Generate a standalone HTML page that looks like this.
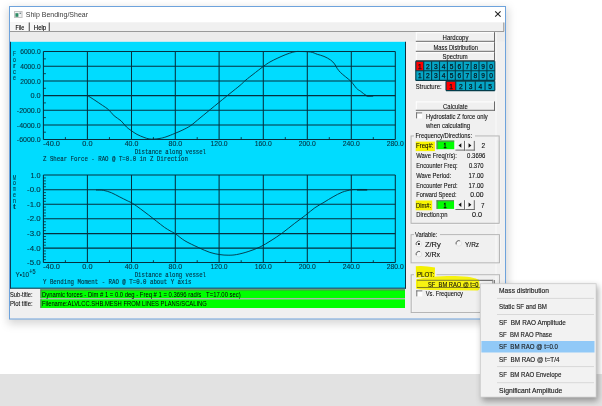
<!DOCTYPE html>
<html><head><meta charset="utf-8"><title>Ship Bending/Shear</title>
<style>html,body{margin:0;padding:0;background:#fff;overflow:hidden;width:602px;height:406px}
svg{display:block;will-change:transform}</style></head>
<body><svg width="602" height="406" viewBox="0 0 602 406">
<rect x="0" y="0" width="602" height="406" fill="#ffffff" />
<rect x="0" y="374" width="602" height="32" fill="#e2e2e2" />
<defs><filter id="sh" x="-20%" y="-20%" width="140%" height="140%"><feGaussianBlur stdDeviation="4"/></filter><filter id="sh2" x="-20%" y="-20%" width="140%" height="140%"><feGaussianBlur stdDeviation="3"/></filter><filter id="hl" x="-10%" y="-50%" width="120%" height="200%"><feGaussianBlur stdDeviation="0.8"/></filter></defs>
<rect x="8" y="8" width="500" height="316" fill="rgba(0,0,0,0.16)" filter="url(#sh)"/>
<rect x="9" y="6" width="497" height="313.5" fill="#6ea3dc" />
<rect x="10" y="7" width="495" height="311.5" fill="#f0f0f0" />
<rect x="10" y="7" width="495" height="15.5" fill="#ffffff" />
<rect x="14" y="11" width="8.5" height="7" fill="#f2f2f2" />
<rect x="14.5" y="11.5" width="7.5" height="6" fill="none" stroke="#c4c4c4" stroke-width="1"/>
<rect x="15.4" y="13.2" width="3" height="3.6" fill="#2f8a64" />
<rect x="19.5" y="12.6" width="1.6" height="1.4" fill="#7a8a90" />
<text x="25.80" y="17.20" font-size="7.9" fill="#3a3a3a" font-family="'Liberation Sans', sans-serif" textLength="62.20" lengthAdjust="spacingAndGlyphs" >Ship Bending/Shear</text>
<line x1="495.2" y1="11.3" x2="500.6" y2="16.7" stroke="#222" stroke-width="1.05" />
<line x1="500.6" y1="11.3" x2="495.2" y2="16.7" stroke="#222" stroke-width="1.05" />
<rect x="10" y="22.5" width="494" height="9" fill="#f0f0f0" />
<rect x="10" y="22.5" width="19" height="8.5" fill="#f7f7f7" />
<rect x="30" y="22.5" width="19" height="8.5" fill="#f7f7f7" />
<line x1="29.3" y1="22.5" x2="29.3" y2="31.5" stroke="#606060" stroke-width="1.2" />
<line x1="49.3" y1="22.5" x2="49.3" y2="31.5" stroke="#606060" stroke-width="1.2" />
<line x1="503.8" y1="22.5" x2="503.8" y2="31.5" stroke="#909090" stroke-width="1" />
<text x="15.60" y="29.80" font-size="7.2" fill="#0a0a0a" font-family="'Liberation Sans', sans-serif" textLength="8.60" lengthAdjust="spacingAndGlyphs" stroke="#0a0a0a" stroke-width="0.15">File</text>
<text x="33.80" y="29.80" font-size="7.2" fill="#0a0a0a" font-family="'Liberation Sans', sans-serif" textLength="12.40" lengthAdjust="spacingAndGlyphs" stroke="#0a0a0a" stroke-width="0.15">Help</text>
<line x1="10" y1="31.5" x2="504" y2="31.5" stroke="#9a9a9a" stroke-width="1" />
<rect x="10" y="32" width="495" height="9.5" fill="#ececec" />
<rect x="10" y="41.8" width="396" height="246.7" fill="#00dcff" />
<line x1="10.5" y1="41.8" x2="10.5" y2="288.5" stroke="#0a3b55" stroke-width="1" />
<line x1="405.5" y1="41.8" x2="405.5" y2="288.5" stroke="#103040" stroke-width="1" />
<line x1="10" y1="288.2" x2="406" y2="288.2" stroke="#183040" stroke-width="1" />
<line x1="43.4" y1="51.4" x2="43.4" y2="139.4" stroke="#05303f" stroke-width="1.05" />
<line x1="87.4" y1="51.4" x2="87.4" y2="139.4" stroke="#05303f" stroke-width="1.05" />
<line x1="131.5" y1="51.4" x2="131.5" y2="139.4" stroke="#05303f" stroke-width="1.05" />
<line x1="175.3" y1="51.4" x2="175.3" y2="139.4" stroke="#05303f" stroke-width="1.05" />
<line x1="219.1" y1="51.4" x2="219.1" y2="139.4" stroke="#05303f" stroke-width="1.05" />
<line x1="263.3" y1="51.4" x2="263.3" y2="139.4" stroke="#05303f" stroke-width="1.05" />
<line x1="307.3" y1="51.4" x2="307.3" y2="139.4" stroke="#05303f" stroke-width="1.05" />
<line x1="351.3" y1="51.4" x2="351.3" y2="139.4" stroke="#05303f" stroke-width="1.05" />
<line x1="395.3" y1="51.4" x2="395.3" y2="139.4" stroke="#05303f" stroke-width="1.05" />
<line x1="43.4" y1="51.4" x2="395.3" y2="51.4" stroke="#05303f" stroke-width="1.05" />
<line x1="43.4" y1="66.3" x2="395.3" y2="66.3" stroke="#05303f" stroke-width="1.05" />
<line x1="43.4" y1="81.0" x2="395.3" y2="81.0" stroke="#05303f" stroke-width="1.05" />
<line x1="43.4" y1="95.6" x2="395.3" y2="95.6" stroke="#05303f" stroke-width="1.05" />
<line x1="43.4" y1="110.2" x2="395.3" y2="110.2" stroke="#05303f" stroke-width="1.05" />
<line x1="43.4" y1="125.0" x2="395.3" y2="125.0" stroke="#05303f" stroke-width="1.05" />
<line x1="43.4" y1="139.4" x2="395.3" y2="139.4" stroke="#05303f" stroke-width="1.05" />
<line x1="43.4" y1="58.849999999999994" x2="45.9" y2="58.849999999999994" stroke="#05303f" stroke-width="0.85" />
<line x1="43.4" y1="73.65" x2="45.9" y2="73.65" stroke="#05303f" stroke-width="0.85" />
<line x1="43.4" y1="88.3" x2="45.9" y2="88.3" stroke="#05303f" stroke-width="0.85" />
<line x1="43.4" y1="102.9" x2="45.9" y2="102.9" stroke="#05303f" stroke-width="0.85" />
<line x1="43.4" y1="117.6" x2="45.9" y2="117.6" stroke="#05303f" stroke-width="0.85" />
<line x1="43.4" y1="132.2" x2="45.9" y2="132.2" stroke="#05303f" stroke-width="0.85" />
<line x1="65.4" y1="139.4" x2="65.4" y2="137.1" stroke="#05303f" stroke-width="0.9" />
<line x1="109.45" y1="139.4" x2="109.45" y2="137.1" stroke="#05303f" stroke-width="0.9" />
<line x1="153.4" y1="139.4" x2="153.4" y2="137.1" stroke="#05303f" stroke-width="0.9" />
<line x1="197.2" y1="139.4" x2="197.2" y2="137.1" stroke="#05303f" stroke-width="0.9" />
<line x1="241.2" y1="139.4" x2="241.2" y2="137.1" stroke="#05303f" stroke-width="0.9" />
<line x1="285.3" y1="139.4" x2="285.3" y2="137.1" stroke="#05303f" stroke-width="0.9" />
<line x1="329.3" y1="139.4" x2="329.3" y2="137.1" stroke="#05303f" stroke-width="0.9" />
<line x1="373.3" y1="139.4" x2="373.3" y2="137.1" stroke="#05303f" stroke-width="0.9" />
<path d="M 87.40 95.50 C 88.48 96.18 91.38 97.95 93.90 99.60 C 96.42 101.25 100.05 103.72 102.50 105.40 C 104.95 107.08 106.65 107.95 108.60 109.70 C 110.55 111.45 112.13 114.05 114.20 115.90 C 116.27 117.75 118.95 118.95 121.00 120.80 C 123.05 122.65 124.77 125.35 126.50 127.00 C 128.23 128.65 129.65 129.47 131.40 130.70 C 133.15 131.93 134.90 133.28 137.00 134.40 C 139.10 135.52 142.00 136.65 144.00 137.40 C 146.00 138.15 147.33 138.62 149.00 138.90 C 150.67 139.18 152.17 139.18 154.00 139.10 C 155.83 139.02 158.02 138.77 160.00 138.40 C 161.98 138.03 163.42 137.73 165.90 136.90 C 168.38 136.07 172.07 134.57 174.90 133.40 C 177.73 132.23 180.25 131.22 182.90 129.90 C 185.55 128.58 187.95 127.48 190.80 125.50 C 193.65 123.52 196.03 121.25 200.00 118.00 C 203.97 114.75 209.60 110.09 214.60 106.00 C 219.60 101.91 225.77 96.88 230.00 93.45 C 234.23 90.02 237.33 87.66 240.00 85.40 C 242.67 83.14 243.83 81.73 246.00 79.90 C 248.17 78.07 250.10 76.65 253.00 74.40 C 255.90 72.15 260.58 68.47 263.40 66.40 C 266.22 64.33 267.48 63.40 269.90 62.00 C 272.32 60.60 275.23 59.25 277.90 58.00 C 280.57 56.75 283.42 55.47 285.90 54.50 C 288.38 53.53 290.98 52.70 292.80 52.20 C 294.62 51.70 295.60 51.62 296.80 51.50 C 298.00 51.38 297.68 51.42 300.00 51.50 C 302.32 51.58 307.82 51.53 310.70 52.00 C 313.58 52.47 315.08 53.57 317.30 54.30 C 319.52 55.03 321.78 55.45 324.00 56.40 C 326.22 57.35 328.83 58.73 330.60 60.00 C 332.37 61.27 333.48 62.57 334.60 64.00 C 335.72 65.43 336.30 67.17 337.30 68.60 C 338.30 70.03 339.27 71.27 340.60 72.60 C 341.93 73.93 343.52 75.08 345.30 76.60 C 347.08 78.12 349.43 79.75 351.30 81.70 C 353.17 83.65 354.97 86.72 356.50 88.30 C 358.03 89.88 358.82 90.00 360.50 91.20 C 362.18 92.40 364.52 94.77 366.60 95.50 C 368.68 96.23 371.93 95.58 373.00 95.60 " fill="none" stroke="#05303f" stroke-width="0.9" stroke-linejoin="round"/>
<text x="40.60" y="53.95" font-size="7.2" fill="#05303f" font-family="'Liberation Sans', sans-serif" textLength="20.40" lengthAdjust="spacingAndGlyphs" text-anchor="end" stroke="#05303f" stroke-width="0.1">6000.0</text>
<text x="40.60" y="68.85" font-size="7.2" fill="#05303f" font-family="'Liberation Sans', sans-serif" textLength="20.40" lengthAdjust="spacingAndGlyphs" text-anchor="end" stroke="#05303f" stroke-width="0.1">4000.0</text>
<text x="40.60" y="83.55" font-size="7.2" fill="#05303f" font-family="'Liberation Sans', sans-serif" textLength="20.40" lengthAdjust="spacingAndGlyphs" text-anchor="end" stroke="#05303f" stroke-width="0.1">2000.0</text>
<text x="40.60" y="98.15" font-size="7.2" fill="#05303f" font-family="'Liberation Sans', sans-serif" textLength="10.20" lengthAdjust="spacingAndGlyphs" text-anchor="end" stroke="#05303f" stroke-width="0.1">0.0</text>
<text x="40.60" y="112.75" font-size="7.2" fill="#05303f" font-family="'Liberation Sans', sans-serif" textLength="23.80" lengthAdjust="spacingAndGlyphs" text-anchor="end" stroke="#05303f" stroke-width="0.1">-2000.0</text>
<text x="40.60" y="127.55" font-size="7.2" fill="#05303f" font-family="'Liberation Sans', sans-serif" textLength="23.80" lengthAdjust="spacingAndGlyphs" text-anchor="end" stroke="#05303f" stroke-width="0.1">-4000.0</text>
<text x="40.60" y="141.95" font-size="7.2" fill="#05303f" font-family="'Liberation Sans', sans-serif" textLength="23.80" lengthAdjust="spacingAndGlyphs" text-anchor="end" stroke="#05303f" stroke-width="0.1">-6000.0</text>
<text x="43.00" y="146.00" font-size="7.2" fill="#05303f" font-family="'Liberation Sans', sans-serif" textLength="17.00" lengthAdjust="spacingAndGlyphs" stroke="#05303f" stroke-width="0.1">-40.0</text>
<text x="87.40" y="146.00" font-size="7.2" fill="#05303f" font-family="'Liberation Sans', sans-serif" textLength="10.20" lengthAdjust="spacingAndGlyphs" text-anchor="middle" stroke="#05303f" stroke-width="0.1">0.0</text>
<text x="131.50" y="146.00" font-size="7.2" fill="#05303f" font-family="'Liberation Sans', sans-serif" textLength="13.60" lengthAdjust="spacingAndGlyphs" text-anchor="middle" stroke="#05303f" stroke-width="0.1">40.0</text>
<text x="175.30" y="146.00" font-size="7.2" fill="#05303f" font-family="'Liberation Sans', sans-serif" textLength="13.60" lengthAdjust="spacingAndGlyphs" text-anchor="middle" stroke="#05303f" stroke-width="0.1">80.0</text>
<text x="219.10" y="146.00" font-size="7.2" fill="#05303f" font-family="'Liberation Sans', sans-serif" textLength="17.00" lengthAdjust="spacingAndGlyphs" text-anchor="middle" stroke="#05303f" stroke-width="0.1">120.0</text>
<text x="263.30" y="146.00" font-size="7.2" fill="#05303f" font-family="'Liberation Sans', sans-serif" textLength="17.00" lengthAdjust="spacingAndGlyphs" text-anchor="middle" stroke="#05303f" stroke-width="0.1">160.0</text>
<text x="307.30" y="146.00" font-size="7.2" fill="#05303f" font-family="'Liberation Sans', sans-serif" textLength="17.00" lengthAdjust="spacingAndGlyphs" text-anchor="middle" stroke="#05303f" stroke-width="0.1">200.0</text>
<text x="351.30" y="146.00" font-size="7.2" fill="#05303f" font-family="'Liberation Sans', sans-serif" textLength="17.00" lengthAdjust="spacingAndGlyphs" text-anchor="middle" stroke="#05303f" stroke-width="0.1">240.0</text>
<text x="395.30" y="146.00" font-size="7.2" fill="#05303f" font-family="'Liberation Sans', sans-serif" textLength="17.00" lengthAdjust="spacingAndGlyphs" text-anchor="middle" stroke="#05303f" stroke-width="0.1">280.0</text>
<text x="134.70" y="154.00" font-size="8.0" fill="#05303f" font-family="'Liberation Mono', monospace" textLength="71.30" lengthAdjust="spacingAndGlyphs" stroke="#05303f" stroke-width="0.15">Distance along vessel</text>
<text x="43.00" y="161.30" font-size="8.0" fill="#05303f" font-family="'Liberation Mono', monospace" textLength="144.90" lengthAdjust="spacingAndGlyphs" stroke="#05303f" stroke-width="0.15">Z Shear Force - RAO @ T=0.0 in Z Direction</text>
<text x="14.50" y="55.90" font-size="7.6" fill="#05303f" font-family="'Liberation Sans', sans-serif" textLength="2.90" lengthAdjust="spacingAndGlyphs" text-anchor="middle" stroke="#05303f" stroke-width="0.12">F</text>
<text x="14.50" y="61.85" font-size="7.6" fill="#05303f" font-family="'Liberation Sans', sans-serif" textLength="2.90" lengthAdjust="spacingAndGlyphs" text-anchor="middle" stroke="#05303f" stroke-width="0.12">o</text>
<text x="14.50" y="67.80" font-size="7.6" fill="#05303f" font-family="'Liberation Sans', sans-serif" textLength="2.90" lengthAdjust="spacingAndGlyphs" text-anchor="middle" stroke="#05303f" stroke-width="0.12">r</text>
<text x="14.50" y="73.75" font-size="7.6" fill="#05303f" font-family="'Liberation Sans', sans-serif" textLength="2.90" lengthAdjust="spacingAndGlyphs" text-anchor="middle" stroke="#05303f" stroke-width="0.12">c</text>
<text x="14.50" y="79.70" font-size="7.6" fill="#05303f" font-family="'Liberation Sans', sans-serif" textLength="2.90" lengthAdjust="spacingAndGlyphs" text-anchor="middle" stroke="#05303f" stroke-width="0.12">e</text>
<line x1="43.4" y1="175.0" x2="43.4" y2="262.5" stroke="#05303f" stroke-width="1.05" />
<line x1="87.4" y1="175.0" x2="87.4" y2="262.5" stroke="#05303f" stroke-width="1.05" />
<line x1="131.5" y1="175.0" x2="131.5" y2="262.5" stroke="#05303f" stroke-width="1.05" />
<line x1="175.3" y1="175.0" x2="175.3" y2="262.5" stroke="#05303f" stroke-width="1.05" />
<line x1="219.1" y1="175.0" x2="219.1" y2="262.5" stroke="#05303f" stroke-width="1.05" />
<line x1="263.3" y1="175.0" x2="263.3" y2="262.5" stroke="#05303f" stroke-width="1.05" />
<line x1="307.3" y1="175.0" x2="307.3" y2="262.5" stroke="#05303f" stroke-width="1.05" />
<line x1="351.3" y1="175.0" x2="351.3" y2="262.5" stroke="#05303f" stroke-width="1.05" />
<line x1="395.3" y1="175.0" x2="395.3" y2="262.5" stroke="#05303f" stroke-width="1.05" />
<line x1="43.4" y1="175.0" x2="395.3" y2="175.0" stroke="#05303f" stroke-width="1.05" />
<line x1="43.4" y1="189.7" x2="395.3" y2="189.7" stroke="#05303f" stroke-width="1.05" />
<line x1="43.4" y1="204.2" x2="395.3" y2="204.2" stroke="#05303f" stroke-width="1.05" />
<line x1="43.4" y1="218.8" x2="395.3" y2="218.8" stroke="#05303f" stroke-width="1.05" />
<line x1="43.4" y1="233.6" x2="395.3" y2="233.6" stroke="#05303f" stroke-width="1.05" />
<line x1="43.4" y1="248.1" x2="395.3" y2="248.1" stroke="#05303f" stroke-width="1.05" />
<line x1="43.4" y1="262.5" x2="395.3" y2="262.5" stroke="#05303f" stroke-width="1.05" />
<line x1="43.4" y1="177.94" x2="45.9" y2="177.94" stroke="#05303f" stroke-width="0.85" />
<line x1="43.4" y1="180.88" x2="45.9" y2="180.88" stroke="#05303f" stroke-width="0.85" />
<line x1="43.4" y1="183.82" x2="45.9" y2="183.82" stroke="#05303f" stroke-width="0.85" />
<line x1="43.4" y1="186.76" x2="45.9" y2="186.76" stroke="#05303f" stroke-width="0.85" />
<line x1="43.4" y1="192.6" x2="45.9" y2="192.6" stroke="#05303f" stroke-width="0.85" />
<line x1="43.4" y1="195.5" x2="45.9" y2="195.5" stroke="#05303f" stroke-width="0.85" />
<line x1="43.4" y1="198.39999999999998" x2="45.9" y2="198.39999999999998" stroke="#05303f" stroke-width="0.85" />
<line x1="43.4" y1="201.29999999999998" x2="45.9" y2="201.29999999999998" stroke="#05303f" stroke-width="0.85" />
<line x1="43.4" y1="207.12" x2="45.9" y2="207.12" stroke="#05303f" stroke-width="0.85" />
<line x1="43.4" y1="210.04" x2="45.9" y2="210.04" stroke="#05303f" stroke-width="0.85" />
<line x1="43.4" y1="212.96" x2="45.9" y2="212.96" stroke="#05303f" stroke-width="0.85" />
<line x1="43.4" y1="215.88" x2="45.9" y2="215.88" stroke="#05303f" stroke-width="0.85" />
<line x1="43.4" y1="221.76000000000002" x2="45.9" y2="221.76000000000002" stroke="#05303f" stroke-width="0.85" />
<line x1="43.4" y1="224.72" x2="45.9" y2="224.72" stroke="#05303f" stroke-width="0.85" />
<line x1="43.4" y1="227.68" x2="45.9" y2="227.68" stroke="#05303f" stroke-width="0.85" />
<line x1="43.4" y1="230.64" x2="45.9" y2="230.64" stroke="#05303f" stroke-width="0.85" />
<line x1="43.4" y1="236.5" x2="45.9" y2="236.5" stroke="#05303f" stroke-width="0.85" />
<line x1="43.4" y1="239.4" x2="45.9" y2="239.4" stroke="#05303f" stroke-width="0.85" />
<line x1="43.4" y1="242.29999999999998" x2="45.9" y2="242.29999999999998" stroke="#05303f" stroke-width="0.85" />
<line x1="43.4" y1="245.2" x2="45.9" y2="245.2" stroke="#05303f" stroke-width="0.85" />
<line x1="43.4" y1="250.98" x2="45.9" y2="250.98" stroke="#05303f" stroke-width="0.85" />
<line x1="43.4" y1="253.85999999999999" x2="45.9" y2="253.85999999999999" stroke="#05303f" stroke-width="0.85" />
<line x1="43.4" y1="256.74" x2="45.9" y2="256.74" stroke="#05303f" stroke-width="0.85" />
<line x1="43.4" y1="259.62" x2="45.9" y2="259.62" stroke="#05303f" stroke-width="0.85" />
<line x1="65.4" y1="262.5" x2="65.4" y2="260.2" stroke="#05303f" stroke-width="0.9" />
<line x1="109.45" y1="262.5" x2="109.45" y2="260.2" stroke="#05303f" stroke-width="0.9" />
<line x1="153.4" y1="262.5" x2="153.4" y2="260.2" stroke="#05303f" stroke-width="0.9" />
<line x1="197.2" y1="262.5" x2="197.2" y2="260.2" stroke="#05303f" stroke-width="0.9" />
<line x1="241.2" y1="262.5" x2="241.2" y2="260.2" stroke="#05303f" stroke-width="0.9" />
<line x1="285.3" y1="262.5" x2="285.3" y2="260.2" stroke="#05303f" stroke-width="0.9" />
<line x1="329.3" y1="262.5" x2="329.3" y2="260.2" stroke="#05303f" stroke-width="0.9" />
<line x1="373.3" y1="262.5" x2="373.3" y2="260.2" stroke="#05303f" stroke-width="0.9" />
<path d="M 96.00 190.00 C 97.22 190.05 100.75 189.85 103.30 190.30 C 105.85 190.75 108.65 191.63 111.30 192.70 C 113.95 193.77 116.55 195.37 119.20 196.70 C 121.85 198.03 124.98 199.60 127.20 200.70 C 129.42 201.80 130.28 201.93 132.50 203.30 C 134.72 204.67 137.83 206.97 140.50 208.90 C 143.17 210.83 145.85 212.87 148.50 214.90 C 151.15 216.93 153.75 219.03 156.40 221.10 C 159.05 223.17 162.13 225.68 164.40 227.30 C 166.67 228.92 168.10 229.67 170.00 230.80 C 171.90 231.93 173.32 232.43 175.80 234.10 C 178.28 235.77 181.17 238.58 184.90 240.80 C 188.63 243.02 194.03 245.47 198.20 247.40 C 202.37 249.33 206.30 251.20 209.90 252.40 C 213.50 253.60 216.77 254.13 219.80 254.60 C 222.83 255.07 225.33 255.20 228.10 255.20 C 230.87 255.20 233.07 255.20 236.40 254.60 C 239.73 254.00 244.17 252.87 248.10 251.60 C 252.03 250.33 256.18 248.83 260.00 247.00 C 263.82 245.17 267.35 242.88 271.00 240.60 C 274.65 238.32 277.95 236.18 281.90 233.30 C 285.85 230.42 290.73 226.33 294.70 223.30 C 298.67 220.27 302.35 217.68 305.70 215.10 C 309.05 212.52 311.75 209.93 314.80 207.80 C 317.85 205.67 320.95 204.13 324.00 202.30 C 327.05 200.47 330.07 198.48 333.10 196.80 C 336.13 195.12 339.15 193.37 342.20 192.20 C 345.25 191.03 348.97 190.25 351.40 189.80 C 353.83 189.35 354.22 189.55 356.80 189.50 C 359.38 189.45 365.22 189.50 366.90 189.50 " fill="none" stroke="#05303f" stroke-width="0.9" stroke-linejoin="round"/>
<text x="40.60" y="177.55" font-size="7.2" fill="#05303f" font-family="'Liberation Sans', sans-serif" textLength="10.20" lengthAdjust="spacingAndGlyphs" text-anchor="end" stroke="#05303f" stroke-width="0.1">1.0</text>
<text x="40.60" y="192.25" font-size="7.2" fill="#05303f" font-family="'Liberation Sans', sans-serif" textLength="13.60" lengthAdjust="spacingAndGlyphs" text-anchor="end" stroke="#05303f" stroke-width="0.1">-0.0</text>
<text x="40.60" y="206.75" font-size="7.2" fill="#05303f" font-family="'Liberation Sans', sans-serif" textLength="13.60" lengthAdjust="spacingAndGlyphs" text-anchor="end" stroke="#05303f" stroke-width="0.1">-1.0</text>
<text x="40.60" y="221.35" font-size="7.2" fill="#05303f" font-family="'Liberation Sans', sans-serif" textLength="13.60" lengthAdjust="spacingAndGlyphs" text-anchor="end" stroke="#05303f" stroke-width="0.1">-2.0</text>
<text x="40.60" y="236.15" font-size="7.2" fill="#05303f" font-family="'Liberation Sans', sans-serif" textLength="13.60" lengthAdjust="spacingAndGlyphs" text-anchor="end" stroke="#05303f" stroke-width="0.1">-3.0</text>
<text x="40.60" y="250.65" font-size="7.2" fill="#05303f" font-family="'Liberation Sans', sans-serif" textLength="13.60" lengthAdjust="spacingAndGlyphs" text-anchor="end" stroke="#05303f" stroke-width="0.1">-4.0</text>
<text x="40.60" y="265.05" font-size="7.2" fill="#05303f" font-family="'Liberation Sans', sans-serif" textLength="13.60" lengthAdjust="spacingAndGlyphs" text-anchor="end" stroke="#05303f" stroke-width="0.1">-5.0</text>
<text x="43.00" y="269.10" font-size="7.2" fill="#05303f" font-family="'Liberation Sans', sans-serif" textLength="17.00" lengthAdjust="spacingAndGlyphs" stroke="#05303f" stroke-width="0.1">-40.0</text>
<text x="87.40" y="269.10" font-size="7.2" fill="#05303f" font-family="'Liberation Sans', sans-serif" textLength="10.20" lengthAdjust="spacingAndGlyphs" text-anchor="middle" stroke="#05303f" stroke-width="0.1">0.0</text>
<text x="131.50" y="269.10" font-size="7.2" fill="#05303f" font-family="'Liberation Sans', sans-serif" textLength="13.60" lengthAdjust="spacingAndGlyphs" text-anchor="middle" stroke="#05303f" stroke-width="0.1">40.0</text>
<text x="175.30" y="269.10" font-size="7.2" fill="#05303f" font-family="'Liberation Sans', sans-serif" textLength="13.60" lengthAdjust="spacingAndGlyphs" text-anchor="middle" stroke="#05303f" stroke-width="0.1">80.0</text>
<text x="219.10" y="269.10" font-size="7.2" fill="#05303f" font-family="'Liberation Sans', sans-serif" textLength="17.00" lengthAdjust="spacingAndGlyphs" text-anchor="middle" stroke="#05303f" stroke-width="0.1">120.0</text>
<text x="263.30" y="269.10" font-size="7.2" fill="#05303f" font-family="'Liberation Sans', sans-serif" textLength="17.00" lengthAdjust="spacingAndGlyphs" text-anchor="middle" stroke="#05303f" stroke-width="0.1">160.0</text>
<text x="307.30" y="269.10" font-size="7.2" fill="#05303f" font-family="'Liberation Sans', sans-serif" textLength="17.00" lengthAdjust="spacingAndGlyphs" text-anchor="middle" stroke="#05303f" stroke-width="0.1">200.0</text>
<text x="351.30" y="269.10" font-size="7.2" fill="#05303f" font-family="'Liberation Sans', sans-serif" textLength="17.00" lengthAdjust="spacingAndGlyphs" text-anchor="middle" stroke="#05303f" stroke-width="0.1">240.0</text>
<text x="395.30" y="269.10" font-size="7.2" fill="#05303f" font-family="'Liberation Sans', sans-serif" textLength="17.00" lengthAdjust="spacingAndGlyphs" text-anchor="middle" stroke="#05303f" stroke-width="0.1">280.0</text>
<text x="134.70" y="277.10" font-size="8.0" fill="#05303f" font-family="'Liberation Mono', monospace" textLength="71.30" lengthAdjust="spacingAndGlyphs" stroke="#05303f" stroke-width="0.15">Distance along vessel</text>
<text x="43.00" y="284.40" font-size="8.0" fill="#05303f" font-family="'Liberation Mono', monospace" textLength="148.35" lengthAdjust="spacingAndGlyphs" stroke="#05303f" stroke-width="0.15">Y Bending Moment - RAO @ T=0.0 about Y axis</text>
<text x="14.50" y="179.50" font-size="7.6" fill="#05303f" font-family="'Liberation Sans', sans-serif" textLength="3.40" lengthAdjust="spacingAndGlyphs" text-anchor="middle" stroke="#05303f" stroke-width="0.12">M</text>
<text x="14.50" y="185.45" font-size="7.6" fill="#05303f" font-family="'Liberation Sans', sans-serif" textLength="2.90" lengthAdjust="spacingAndGlyphs" text-anchor="middle" stroke="#05303f" stroke-width="0.12">o</text>
<text x="14.50" y="191.40" font-size="7.6" fill="#05303f" font-family="'Liberation Sans', sans-serif" textLength="2.90" lengthAdjust="spacingAndGlyphs" text-anchor="middle" stroke="#05303f" stroke-width="0.12">m</text>
<text x="14.50" y="197.35" font-size="7.6" fill="#05303f" font-family="'Liberation Sans', sans-serif" textLength="2.90" lengthAdjust="spacingAndGlyphs" text-anchor="middle" stroke="#05303f" stroke-width="0.12">e</text>
<text x="14.50" y="203.30" font-size="7.6" fill="#05303f" font-family="'Liberation Sans', sans-serif" textLength="2.90" lengthAdjust="spacingAndGlyphs" text-anchor="middle" stroke="#05303f" stroke-width="0.12">n</text>
<text x="14.50" y="209.25" font-size="7.6" fill="#05303f" font-family="'Liberation Sans', sans-serif" textLength="2.90" lengthAdjust="spacingAndGlyphs" text-anchor="middle" stroke="#05303f" stroke-width="0.12">t</text>
<line x1="366.5" y1="95.8" x2="373.2" y2="95.8" stroke="#05303f" stroke-width="1.5" />
<line x1="357" y1="189.8" x2="367.2" y2="189.8" stroke="#05303f" stroke-width="1.5" />
<text x="15.50" y="276.60" font-size="7.2" fill="#05303f" font-family="'Liberation Sans', sans-serif" textLength="13.50" lengthAdjust="spacingAndGlyphs" stroke="#05303f" stroke-width="0.1">Y•10</text>
<text x="29.20" y="274.00" font-size="6.4" fill="#05303f" font-family="'Liberation Sans', sans-serif" textLength="6.30" lengthAdjust="spacingAndGlyphs" stroke="#05303f" stroke-width="0.1">+5</text>
<text x="10.00" y="296.80" font-size="6.7" fill="#0a0a0a" font-family="'Liberation Sans', sans-serif" textLength="22.60" lengthAdjust="spacingAndGlyphs" stroke="#0a0a0a" stroke-width="0.08">Sub-title:</text>
<text x="10.00" y="306.40" font-size="6.7" fill="#0a0a0a" font-family="'Liberation Sans', sans-serif" textLength="22.60" lengthAdjust="spacingAndGlyphs" stroke="#0a0a0a" stroke-width="0.08">Plot title:</text>
<rect x="40.4" y="289.4" width="364.6" height="8.8" fill="#00ff00" />
<rect x="40.4" y="299.2" width="364.6" height="8.8" fill="#00ff00" />
<line x1="40.4" y1="289.9" x2="405" y2="289.9" stroke="#6a6a6a" stroke-width="1" />
<line x1="40.9" y1="289.4" x2="40.9" y2="298.2" stroke="#6a6a6a" stroke-width="1" />
<line x1="40.4" y1="298.7" x2="405" y2="298.7" stroke="#a8a8a8" stroke-width="1" />
<line x1="40.9" y1="299.2" x2="40.9" y2="308" stroke="#6a6a6a" stroke-width="1" />
<text x="42.00" y="296.60" font-size="7.0" fill="#000" font-family="'Liberation Sans', sans-serif" textLength="198.70" lengthAdjust="spacingAndGlyphs"  xml:space="preserve" style="white-space:pre">Dynamic forces - Dim # 1 = 0.0 deg - Freq # 1 = 0.3696 rad/s   T=17.00 sec)</text>
<text x="42.00" y="306.30" font-size="7.0" fill="#000" font-family="'Liberation Sans', sans-serif" textLength="164.80" lengthAdjust="spacingAndGlyphs" >Filename:ALVLCC.SHB.MESH FROM LINES PLANS/SCALING</text>
<rect x="415.8" y="32.2" width="79.19999999999999" height="9.599999999999994" fill="#f0f0f0" />
<line x1="416.3" y1="32.2" x2="416.3" y2="41.8" stroke="#ffffff" stroke-width="1" />
<line x1="415.8" y1="32.7" x2="495.0" y2="32.7" stroke="#ffffff" stroke-width="1" />
<line x1="494.5" y1="32.2" x2="494.5" y2="41.8" stroke="#6a6a6a" stroke-width="1" />
<line x1="415.8" y1="41.3" x2="495.0" y2="41.3" stroke="#6a6a6a" stroke-width="1" />
<text x="442.60" y="39.80" font-size="6.7" fill="#0a0a0a" font-family="'Liberation Sans', sans-serif" textLength="25.80" lengthAdjust="spacingAndGlyphs" stroke="#0a0a0a" stroke-width="0.08">Hardcopy</text>
<rect x="415.8" y="42.2" width="79.19999999999999" height="9.599999999999994" fill="#f0f0f0" />
<line x1="416.3" y1="42.2" x2="416.3" y2="51.8" stroke="#ffffff" stroke-width="1" />
<line x1="415.8" y1="42.7" x2="495.0" y2="42.7" stroke="#ffffff" stroke-width="1" />
<line x1="494.5" y1="42.2" x2="494.5" y2="51.8" stroke="#6a6a6a" stroke-width="1" />
<line x1="415.8" y1="51.3" x2="495.0" y2="51.3" stroke="#6a6a6a" stroke-width="1" />
<text x="433.50" y="49.50" font-size="6.7" fill="#0a0a0a" font-family="'Liberation Sans', sans-serif" textLength="44.40" lengthAdjust="spacingAndGlyphs" stroke="#0a0a0a" stroke-width="0.08">Mass Distribution</text>
<rect x="415.8" y="52.2" width="79.19999999999999" height="8.799999999999997" fill="#f0f0f0" />
<line x1="416.3" y1="52.2" x2="416.3" y2="61.0" stroke="#ffffff" stroke-width="1" />
<line x1="415.8" y1="52.7" x2="495.0" y2="52.7" stroke="#ffffff" stroke-width="1" />
<line x1="494.5" y1="52.2" x2="494.5" y2="61.0" stroke="#6a6a6a" stroke-width="1" />
<line x1="415.8" y1="60.5" x2="495.0" y2="60.5" stroke="#6a6a6a" stroke-width="1" />
<text x="442.60" y="59.00" font-size="6.7" fill="#0a0a0a" font-family="'Liberation Sans', sans-serif" textLength="25.10" lengthAdjust="spacingAndGlyphs" stroke="#0a0a0a" stroke-width="0.08">Spectrum</text>
<line x1="496.0" y1="32" x2="496.0" y2="318" stroke="#fafafa" stroke-width="1" />
<rect x="415.8" y="61.2" width="79.0" height="19.2" fill="#06a6c6" />
<rect x="415.8" y="61.2" width="7.9" height="9.6" fill="#ff0000" />
<line x1="415.8" y1="61.2" x2="415.8" y2="80.4" stroke="#033c4a" stroke-width="1.1" />
<line x1="423.7" y1="61.2" x2="423.7" y2="80.4" stroke="#033c4a" stroke-width="1.1" />
<line x1="431.6" y1="61.2" x2="431.6" y2="80.4" stroke="#033c4a" stroke-width="1.1" />
<line x1="439.5" y1="61.2" x2="439.5" y2="80.4" stroke="#033c4a" stroke-width="1.1" />
<line x1="447.40000000000003" y1="61.2" x2="447.40000000000003" y2="80.4" stroke="#033c4a" stroke-width="1.1" />
<line x1="455.3" y1="61.2" x2="455.3" y2="80.4" stroke="#033c4a" stroke-width="1.1" />
<line x1="463.20000000000005" y1="61.2" x2="463.20000000000005" y2="80.4" stroke="#033c4a" stroke-width="1.1" />
<line x1="471.1" y1="61.2" x2="471.1" y2="80.4" stroke="#033c4a" stroke-width="1.1" />
<line x1="479.0" y1="61.2" x2="479.0" y2="80.4" stroke="#033c4a" stroke-width="1.1" />
<line x1="486.90000000000003" y1="61.2" x2="486.90000000000003" y2="80.4" stroke="#033c4a" stroke-width="1.1" />
<line x1="494.8" y1="61.2" x2="494.8" y2="80.4" stroke="#033c4a" stroke-width="1.1" />
<line x1="415.8" y1="61.2" x2="494.8" y2="61.2" stroke="#033c4a" stroke-width="1.1" />
<line x1="415.8" y1="70.8" x2="494.8" y2="70.8" stroke="#033c4a" stroke-width="1.1" />
<line x1="415.8" y1="80.4" x2="494.8" y2="80.4" stroke="#033c4a" stroke-width="1.1" />
<text x="419.95" y="68.70" font-size="7.6" fill="#061820" font-family="'Liberation Sans', sans-serif" textLength="3.70" lengthAdjust="spacingAndGlyphs" text-anchor="middle" stroke="#061820" stroke-width="0.25">1</text>
<text x="427.85" y="68.70" font-size="7.6" fill="#061820" font-family="'Liberation Sans', sans-serif" textLength="3.70" lengthAdjust="spacingAndGlyphs" text-anchor="middle" stroke="#061820" stroke-width="0.25">2</text>
<text x="435.75" y="68.70" font-size="7.6" fill="#061820" font-family="'Liberation Sans', sans-serif" textLength="3.70" lengthAdjust="spacingAndGlyphs" text-anchor="middle" stroke="#061820" stroke-width="0.25">3</text>
<text x="443.65" y="68.70" font-size="7.6" fill="#061820" font-family="'Liberation Sans', sans-serif" textLength="3.70" lengthAdjust="spacingAndGlyphs" text-anchor="middle" stroke="#061820" stroke-width="0.25">4</text>
<text x="451.55" y="68.70" font-size="7.6" fill="#061820" font-family="'Liberation Sans', sans-serif" textLength="3.70" lengthAdjust="spacingAndGlyphs" text-anchor="middle" stroke="#061820" stroke-width="0.25">5</text>
<text x="459.45" y="68.70" font-size="7.6" fill="#061820" font-family="'Liberation Sans', sans-serif" textLength="3.70" lengthAdjust="spacingAndGlyphs" text-anchor="middle" stroke="#061820" stroke-width="0.25">6</text>
<text x="467.35" y="68.70" font-size="7.6" fill="#061820" font-family="'Liberation Sans', sans-serif" textLength="3.70" lengthAdjust="spacingAndGlyphs" text-anchor="middle" stroke="#061820" stroke-width="0.25">7</text>
<text x="475.25" y="68.70" font-size="7.6" fill="#061820" font-family="'Liberation Sans', sans-serif" textLength="3.70" lengthAdjust="spacingAndGlyphs" text-anchor="middle" stroke="#061820" stroke-width="0.25">8</text>
<text x="483.15" y="68.70" font-size="7.6" fill="#061820" font-family="'Liberation Sans', sans-serif" textLength="3.70" lengthAdjust="spacingAndGlyphs" text-anchor="middle" stroke="#061820" stroke-width="0.25">9</text>
<text x="491.05" y="68.70" font-size="7.6" fill="#061820" font-family="'Liberation Sans', sans-serif" textLength="3.70" lengthAdjust="spacingAndGlyphs" text-anchor="middle" stroke="#061820" stroke-width="0.25">0</text>
<text x="419.95" y="78.30" font-size="7.6" fill="#061820" font-family="'Liberation Sans', sans-serif" textLength="3.70" lengthAdjust="spacingAndGlyphs" text-anchor="middle" stroke="#061820" stroke-width="0.25">1</text>
<text x="427.85" y="78.30" font-size="7.6" fill="#061820" font-family="'Liberation Sans', sans-serif" textLength="3.70" lengthAdjust="spacingAndGlyphs" text-anchor="middle" stroke="#061820" stroke-width="0.25">2</text>
<text x="435.75" y="78.30" font-size="7.6" fill="#061820" font-family="'Liberation Sans', sans-serif" textLength="3.70" lengthAdjust="spacingAndGlyphs" text-anchor="middle" stroke="#061820" stroke-width="0.25">3</text>
<text x="443.65" y="78.30" font-size="7.6" fill="#061820" font-family="'Liberation Sans', sans-serif" textLength="3.70" lengthAdjust="spacingAndGlyphs" text-anchor="middle" stroke="#061820" stroke-width="0.25">4</text>
<text x="451.55" y="78.30" font-size="7.6" fill="#061820" font-family="'Liberation Sans', sans-serif" textLength="3.70" lengthAdjust="spacingAndGlyphs" text-anchor="middle" stroke="#061820" stroke-width="0.25">5</text>
<text x="459.45" y="78.30" font-size="7.6" fill="#061820" font-family="'Liberation Sans', sans-serif" textLength="3.70" lengthAdjust="spacingAndGlyphs" text-anchor="middle" stroke="#061820" stroke-width="0.25">6</text>
<text x="467.35" y="78.30" font-size="7.6" fill="#061820" font-family="'Liberation Sans', sans-serif" textLength="3.70" lengthAdjust="spacingAndGlyphs" text-anchor="middle" stroke="#061820" stroke-width="0.25">7</text>
<text x="475.25" y="78.30" font-size="7.6" fill="#061820" font-family="'Liberation Sans', sans-serif" textLength="3.70" lengthAdjust="spacingAndGlyphs" text-anchor="middle" stroke="#061820" stroke-width="0.25">8</text>
<text x="483.15" y="78.30" font-size="7.6" fill="#061820" font-family="'Liberation Sans', sans-serif" textLength="3.70" lengthAdjust="spacingAndGlyphs" text-anchor="middle" stroke="#061820" stroke-width="0.25">9</text>
<text x="491.05" y="78.30" font-size="7.6" fill="#061820" font-family="'Liberation Sans', sans-serif" textLength="3.70" lengthAdjust="spacingAndGlyphs" text-anchor="middle" stroke="#061820" stroke-width="0.25">0</text>
<rect x="446.0" y="81.2" width="48.8" height="9.4" fill="#06a6c6" />
<rect x="446.0" y="81.2" width="9.76" height="9.4" fill="#ff0000" />
<line x1="446.0" y1="81.2" x2="446.0" y2="90.60000000000001" stroke="#033c4a" stroke-width="1.1" />
<line x1="455.76" y1="81.2" x2="455.76" y2="90.60000000000001" stroke="#033c4a" stroke-width="1.1" />
<line x1="465.52" y1="81.2" x2="465.52" y2="90.60000000000001" stroke="#033c4a" stroke-width="1.1" />
<line x1="475.28" y1="81.2" x2="475.28" y2="90.60000000000001" stroke="#033c4a" stroke-width="1.1" />
<line x1="485.04" y1="81.2" x2="485.04" y2="90.60000000000001" stroke="#033c4a" stroke-width="1.1" />
<line x1="494.8" y1="81.2" x2="494.8" y2="90.60000000000001" stroke="#033c4a" stroke-width="1.1" />
<line x1="446.0" y1="81.2" x2="494.8" y2="81.2" stroke="#033c4a" stroke-width="1.1" />
<line x1="446.0" y1="90.60000000000001" x2="494.8" y2="90.60000000000001" stroke="#033c4a" stroke-width="1.1" />
<text x="451.08" y="88.60" font-size="7.6" fill="#061820" font-family="'Liberation Sans', sans-serif" textLength="3.70" lengthAdjust="spacingAndGlyphs" text-anchor="middle" stroke="#061820" stroke-width="0.25">1</text>
<text x="460.84" y="88.60" font-size="7.6" fill="#061820" font-family="'Liberation Sans', sans-serif" textLength="3.70" lengthAdjust="spacingAndGlyphs" text-anchor="middle" stroke="#061820" stroke-width="0.25">2</text>
<text x="470.60" y="88.60" font-size="7.6" fill="#061820" font-family="'Liberation Sans', sans-serif" textLength="3.70" lengthAdjust="spacingAndGlyphs" text-anchor="middle" stroke="#061820" stroke-width="0.25">3</text>
<text x="480.36" y="88.60" font-size="7.6" fill="#061820" font-family="'Liberation Sans', sans-serif" textLength="3.70" lengthAdjust="spacingAndGlyphs" text-anchor="middle" stroke="#061820" stroke-width="0.25">4</text>
<text x="490.12" y="88.60" font-size="7.6" fill="#061820" font-family="'Liberation Sans', sans-serif" textLength="3.70" lengthAdjust="spacingAndGlyphs" text-anchor="middle" stroke="#061820" stroke-width="0.25">5</text>
<text x="415.80" y="88.60" font-size="6.7" fill="#0a0a0a" font-family="'Liberation Sans', sans-serif" textLength="25.80" lengthAdjust="spacingAndGlyphs" stroke="#0a0a0a" stroke-width="0.08">Structure:</text>
<rect x="415.8" y="101.4" width="79.19999999999999" height="9.399999999999991" fill="#f0f0f0" />
<line x1="416.3" y1="101.4" x2="416.3" y2="110.8" stroke="#ffffff" stroke-width="1" />
<line x1="415.8" y1="101.9" x2="495.0" y2="101.9" stroke="#ffffff" stroke-width="1" />
<line x1="494.5" y1="101.4" x2="494.5" y2="110.8" stroke="#6a6a6a" stroke-width="1" />
<line x1="415.8" y1="110.3" x2="495.0" y2="110.3" stroke="#6a6a6a" stroke-width="1" />
<text x="443.10" y="108.60" font-size="6.7" fill="#0a0a0a" font-family="'Liberation Sans', sans-serif" textLength="24.60" lengthAdjust="spacingAndGlyphs" stroke="#0a0a0a" stroke-width="0.08">Calculate</text>
<rect x="416.1" y="112.4" width="6" height="6" fill="#ffffff" />
<line x1="416.1" y1="112.9" x2="422.1" y2="112.9" stroke="#707070" stroke-width="1" />
<line x1="416.6" y1="112.4" x2="416.6" y2="118.4" stroke="#707070" stroke-width="1" />
<text x="426.00" y="118.70" font-size="6.7" fill="#0a0a0a" font-family="'Liberation Sans', sans-serif" textLength="61.70" lengthAdjust="spacingAndGlyphs" stroke="#0a0a0a" stroke-width="0.08">Hydrostatic Z force only</text>
<text x="426.00" y="128.40" font-size="6.7" fill="#0a0a0a" font-family="'Liberation Sans', sans-serif" textLength="44.20" lengthAdjust="spacingAndGlyphs" stroke="#0a0a0a" stroke-width="0.08">when calculating</text>
<rect x="411.6" y="136.5" width="88.09999999999997" height="87.30000000000001" fill="none" stroke="#ffffff" stroke-width="1"/>
<rect x="411.1" y="136.0" width="88.09999999999997" height="87.30000000000001" fill="none" stroke="#b0b0b0" stroke-width="1"/>
<rect x="414" y="134.0" width="61.0" height="4" fill="#f0f0f0" />
<text x="415.50" y="138.20" font-size="6.7" fill="#0a0a0a" font-family="'Liberation Sans', sans-serif" textLength="56.50" lengthAdjust="spacingAndGlyphs" stroke="#0a0a0a" stroke-width="0.08">Frequency/Directions:</text>
<rect x="415.7" y="141.6" width="19.19999999999999" height="9.5" fill="#f8f400" />
<text x="416.00" y="148.30" font-size="6.7" fill="#0a0a0a" font-family="'Liberation Sans', sans-serif" textLength="17.50" lengthAdjust="spacingAndGlyphs" stroke="#0a0a0a" stroke-width="0.08">Freq#:</text>
<rect x="436.6" y="140.6" width="17.599999999999966" height="8.599999999999994" fill="#00ff00" />
<line x1="436.6" y1="141.1" x2="454.2" y2="141.1" stroke="#707070" stroke-width="1" />
<line x1="437.1" y1="140.6" x2="437.1" y2="149.2" stroke="#707070" stroke-width="1" />
<text x="445.10" y="147.80" font-size="7.6" fill="#0a0a0a" font-family="'Liberation Sans', sans-serif" textLength="3.00" lengthAdjust="spacingAndGlyphs" text-anchor="middle" stroke="#0a0a0a" stroke-width="0.35">1</text>
<rect x="455.4" y="140.9" width="9.600000000000023" height="9.699999999999989" fill="#f2f2f2" />
<line x1="455.9" y1="140.9" x2="455.9" y2="150.6" stroke="#ffffff" stroke-width="1" />
<line x1="464.5" y1="140.9" x2="464.5" y2="150.6" stroke="#6a6a6a" stroke-width="1" />
<line x1="455.4" y1="150.1" x2="465.0" y2="150.1" stroke="#6a6a6a" stroke-width="1" />
<polygon points="461.29999999999995,143.25 461.29999999999995,147.64999999999998 458.5,145.45" fill="#111"/>
<rect x="465.3" y="140.9" width="9.5" height="9.699999999999989" fill="#f2f2f2" />
<line x1="465.8" y1="140.9" x2="465.8" y2="150.6" stroke="#ffffff" stroke-width="1" />
<line x1="474.3" y1="140.9" x2="474.3" y2="150.6" stroke="#6a6a6a" stroke-width="1" />
<line x1="465.3" y1="150.1" x2="474.8" y2="150.1" stroke="#6a6a6a" stroke-width="1" />
<polygon points="468.55,143.25 468.55,147.64999999999998 471.35,145.45" fill="#111"/>
<text x="481.60" y="148.10" font-size="7.2" fill="#0a0a0a" font-family="'Liberation Sans', sans-serif" textLength="3.60" lengthAdjust="spacingAndGlyphs" stroke="#0a0a0a" stroke-width="0.08">2</text>
<text x="416.20" y="158.20" font-size="6.7" fill="#0a0a0a" font-family="'Liberation Sans', sans-serif" textLength="40.80" lengthAdjust="spacingAndGlyphs" stroke="#0a0a0a" stroke-width="0.08">Wave Freq(r/s):</text>
<text x="467.10" y="158.20" font-size="6.7" fill="#0a0a0a" font-family="'Liberation Sans', sans-serif" textLength="18.30" lengthAdjust="spacingAndGlyphs" stroke="#0a0a0a" stroke-width="0.08">0.3696</text>
<text x="416.20" y="168.10" font-size="6.7" fill="#0a0a0a" font-family="'Liberation Sans', sans-serif" textLength="41.30" lengthAdjust="spacingAndGlyphs" stroke="#0a0a0a" stroke-width="0.08">Encounter Freq:</text>
<text x="468.90" y="168.10" font-size="6.7" fill="#0a0a0a" font-family="'Liberation Sans', sans-serif" textLength="14.70" lengthAdjust="spacingAndGlyphs" stroke="#0a0a0a" stroke-width="0.08">0.370</text>
<text x="416.20" y="177.90" font-size="6.7" fill="#0a0a0a" font-family="'Liberation Sans', sans-serif" textLength="34.90" lengthAdjust="spacingAndGlyphs" stroke="#0a0a0a" stroke-width="0.08">Wave Period:</text>
<text x="468.50" y="177.90" font-size="6.7" fill="#0a0a0a" font-family="'Liberation Sans', sans-serif" textLength="15.10" lengthAdjust="spacingAndGlyphs" stroke="#0a0a0a" stroke-width="0.08">17.00</text>
<text x="416.20" y="187.60" font-size="6.7" fill="#0a0a0a" font-family="'Liberation Sans', sans-serif" textLength="41.30" lengthAdjust="spacingAndGlyphs" stroke="#0a0a0a" stroke-width="0.08">Encounter Perd:</text>
<text x="468.50" y="187.60" font-size="6.7" fill="#0a0a0a" font-family="'Liberation Sans', sans-serif" textLength="15.10" lengthAdjust="spacingAndGlyphs" stroke="#0a0a0a" stroke-width="0.08">17.00</text>
<text x="416.20" y="197.40" font-size="6.7" fill="#0a0a0a" font-family="'Liberation Sans', sans-serif" textLength="40.30" lengthAdjust="spacingAndGlyphs" stroke="#0a0a0a" stroke-width="0.08">Forward Speed:</text>
<text x="470.30" y="197.40" font-size="6.7" fill="#0a0a0a" font-family="'Liberation Sans', sans-serif" textLength="13.30" lengthAdjust="spacingAndGlyphs" stroke="#0a0a0a" stroke-width="0.08">0.00</text>
<rect x="415.7" y="200.5" width="16.5" height="9.800000000000011" fill="#f8f400" />
<text x="416.00" y="207.50" font-size="6.7" fill="#0a0a0a" font-family="'Liberation Sans', sans-serif" textLength="15.00" lengthAdjust="spacingAndGlyphs" stroke="#0a0a0a" stroke-width="0.08">Dim#:</text>
<rect x="436.6" y="200.3" width="17.399999999999977" height="8.599999999999994" fill="#00ff00" />
<line x1="436.6" y1="200.8" x2="454.0" y2="200.8" stroke="#707070" stroke-width="1" />
<line x1="437.1" y1="200.3" x2="437.1" y2="208.9" stroke="#707070" stroke-width="1" />
<text x="445.00" y="207.50" font-size="7.6" fill="#0a0a0a" font-family="'Liberation Sans', sans-serif" textLength="3.00" lengthAdjust="spacingAndGlyphs" text-anchor="middle" stroke="#0a0a0a" stroke-width="0.35">1</text>
<rect x="455.4" y="200.2" width="9.600000000000023" height="9.800000000000011" fill="#f2f2f2" />
<line x1="455.9" y1="200.2" x2="455.9" y2="210.0" stroke="#ffffff" stroke-width="1" />
<line x1="464.5" y1="200.2" x2="464.5" y2="210.0" stroke="#6a6a6a" stroke-width="1" />
<line x1="455.4" y1="209.5" x2="465.0" y2="209.5" stroke="#6a6a6a" stroke-width="1" />
<polygon points="461.29999999999995,202.6 461.29999999999995,206.99999999999997 458.5,204.79999999999998" fill="#111"/>
<rect x="465.3" y="200.2" width="9.5" height="9.800000000000011" fill="#f2f2f2" />
<line x1="465.8" y1="200.2" x2="465.8" y2="210.0" stroke="#ffffff" stroke-width="1" />
<line x1="474.3" y1="200.2" x2="474.3" y2="210.0" stroke="#6a6a6a" stroke-width="1" />
<line x1="465.3" y1="209.5" x2="474.8" y2="209.5" stroke="#6a6a6a" stroke-width="1" />
<polygon points="468.55,202.6 468.55,206.99999999999997 471.35,204.79999999999998" fill="#111"/>
<text x="481.00" y="207.50" font-size="7.2" fill="#0a0a0a" font-family="'Liberation Sans', sans-serif" textLength="3.50" lengthAdjust="spacingAndGlyphs" stroke="#0a0a0a" stroke-width="0.08">7</text>
<text x="416.20" y="217.20" font-size="6.7" fill="#0a0a0a" font-family="'Liberation Sans', sans-serif" textLength="31.40" lengthAdjust="spacingAndGlyphs" stroke="#0a0a0a" stroke-width="0.08">Direction:pn</text>
<text x="472.10" y="217.20" font-size="6.7" fill="#0a0a0a" font-family="'Liberation Sans', sans-serif" textLength="10.00" lengthAdjust="spacingAndGlyphs" stroke="#0a0a0a" stroke-width="0.08">0.0</text>
<rect x="411.6" y="235.2" width="88.29999999999995" height="28.19999999999999" fill="none" stroke="#ffffff" stroke-width="1"/>
<rect x="411.1" y="234.7" width="88.29999999999995" height="28.19999999999999" fill="none" stroke="#b0b0b0" stroke-width="1"/>
<rect x="414" y="232.7" width="26.0" height="4" fill="#f0f0f0" />
<text x="415.00" y="237.20" font-size="6.7" fill="#0a0a0a" font-family="'Liberation Sans', sans-serif" textLength="22.40" lengthAdjust="spacingAndGlyphs" stroke="#0a0a0a" stroke-width="0.08">Variable:</text>
<circle cx="418.9" cy="244.0" r="2.8" fill="#f6f6f6" stroke="#e0e0e0" stroke-width="0.8"/>
<path d="M 416.29999999999995 245.0 A 2.8 2.8 0 0 1 419.9 241.4" fill="none" stroke="#505050" stroke-width="0.9"/>
<circle cx="418.9" cy="244.0" r="1.1" fill="#111"/>
<text x="424.90" y="246.50" font-size="6.7" fill="#0a0a0a" font-family="'Liberation Sans', sans-serif" textLength="15.90" lengthAdjust="spacingAndGlyphs" stroke="#0a0a0a" stroke-width="0.08">Z/Ry</text>
<circle cx="458.8" cy="243.4" r="2.8" fill="#f6f6f6" stroke="#e0e0e0" stroke-width="0.8"/>
<path d="M 456.2 244.4 A 2.8 2.8 0 0 1 459.8 240.8" fill="none" stroke="#505050" stroke-width="0.9"/>
<text x="465.00" y="246.50" font-size="6.7" fill="#0a0a0a" font-family="'Liberation Sans', sans-serif" textLength="14.10" lengthAdjust="spacingAndGlyphs" stroke="#0a0a0a" stroke-width="0.08">Y/Rz</text>
<circle cx="418.9" cy="254.2" r="2.8" fill="#f6f6f6" stroke="#e0e0e0" stroke-width="0.8"/>
<path d="M 416.29999999999995 255.2 A 2.8 2.8 0 0 1 419.9 251.6" fill="none" stroke="#505050" stroke-width="0.9"/>
<text x="424.90" y="256.80" font-size="6.7" fill="#0a0a0a" font-family="'Liberation Sans', sans-serif" textLength="15.10" lengthAdjust="spacingAndGlyphs" stroke="#0a0a0a" stroke-width="0.08">X/Rx</text>
<rect x="411.7" y="275.3" width="88.40000000000003" height="37.80000000000001" fill="none" stroke="#ffffff" stroke-width="1"/>
<rect x="411.2" y="274.8" width="88.40000000000003" height="37.80000000000001" fill="none" stroke="#b0b0b0" stroke-width="1"/>
<rect x="414" y="272.8" width="22.5" height="4" fill="#f0f0f0" />
<path d="M 415.8 266.2 Q 424 265.2 435 267.6 L 434.8 277.3 L 416 277.6 Z" fill="#f4f000"/>
<text x="416.90" y="276.60" font-size="6.7" fill="#0a0a0a" font-family="'Liberation Sans', sans-serif" textLength="17.30" lengthAdjust="spacingAndGlyphs" stroke="#0a0a0a" stroke-width="0.08">PLOT:</text>
<rect x="417.0" y="279.8" width="76.0" height="8.0" fill="#f4f4f4" />
<line x1="417.0" y1="280.3" x2="493.0" y2="280.3" stroke="#555" stroke-width="1" />
<line x1="417.5" y1="279.8" x2="417.5" y2="287.8" stroke="#555" stroke-width="1" />
<line x1="417.0" y1="287.4" x2="493.0" y2="287.4" stroke="#333" stroke-width="1" />
<line x1="492.8" y1="279.8" x2="492.8" y2="287.8" stroke="#888" stroke-width="1" />
<line x1="494.4" y1="280.0" x2="494.4" y2="284.5" stroke="#555" stroke-width="0.8" />
<path d="M 416 279.4 C 425 277.4 440 275.9 455 276.1 C 468 276.4 476 277.8 479.2 280.5 L 479.6 288 Q 479.4 290.8 476 290.6 L 430 289.9 Q 418 289.6 416 288.4 Z" fill="#f6f200" opacity="0.93"/>
<line x1="417.0" y1="280.3" x2="479" y2="280.3" stroke="#444" stroke-width="0.8" opacity="0.8"/>
<line x1="417.0" y1="287.4" x2="479" y2="287.4" stroke="#333" stroke-width="0.8" opacity="0.8"/>
<text x="428.00" y="286.60" font-size="6.7" fill="#0a0a0a" font-family="'Liberation Sans', sans-serif" textLength="50.50" lengthAdjust="spacingAndGlyphs" stroke="#0a0a0a" stroke-width="0.08" xml:space="preserve" style="white-space:pre">SF  BM RAO @ t=0</text>
<rect x="416.3" y="290.4" width="6" height="6" fill="#ffffff" />
<line x1="416.3" y1="290.9" x2="422.3" y2="290.9" stroke="#707070" stroke-width="1" />
<line x1="416.8" y1="290.4" x2="416.8" y2="296.4" stroke="#707070" stroke-width="1" />
<text x="425.70" y="296.20" font-size="6.7" fill="#0a0a0a" font-family="'Liberation Sans', sans-serif" textLength="37.30" lengthAdjust="spacingAndGlyphs" stroke="#0a0a0a" stroke-width="0.08">Vs. Frequency</text>
<rect x="482" y="286" width="116" height="115" fill="rgba(0,0,0,0.35)" filter="url(#sh2)"/>
<rect x="480" y="283.3" width="116.5" height="114.2" fill="#cccccc" />
<rect x="480.8" y="284.1" width="114.9" height="112.6" fill="#f2f2f2" />
<rect x="481.4" y="341.0" width="113.1" height="11.5" fill="#91c9f7" />
<line x1="497" y1="298.4" x2="594" y2="298.4" stroke="#d8d8d8" stroke-width="1" />
<line x1="497" y1="314.5" x2="594" y2="314.5" stroke="#d8d8d8" stroke-width="1" />
<line x1="497" y1="366.6" x2="594" y2="366.6" stroke="#d8d8d8" stroke-width="1" />
<line x1="497" y1="382.7" x2="594" y2="382.7" stroke="#d8d8d8" stroke-width="1" />
<text x="499.10" y="293.35" font-size="7.6" fill="#1a1a1a" font-family="'Liberation Sans', sans-serif" textLength="49.80" lengthAdjust="spacingAndGlyphs" stroke="#1a1a1a" stroke-width="0.15">Mass distribution</text>
<text x="499.10" y="309.05" font-size="7.6" fill="#1a1a1a" font-family="'Liberation Sans', sans-serif" textLength="47.90" lengthAdjust="spacingAndGlyphs" stroke="#1a1a1a" stroke-width="0.15">Static SF and BM</text>
<text x="499.10" y="324.95" font-size="7.6" fill="#1a1a1a" font-family="'Liberation Sans', sans-serif" textLength="66.80" lengthAdjust="spacingAndGlyphs" stroke="#1a1a1a" stroke-width="0.15" xml:space="preserve" style="white-space:pre">SF  BM RAO Amplitude</text>
<text x="499.10" y="337.35" font-size="7.6" fill="#1a1a1a" font-family="'Liberation Sans', sans-serif" textLength="53.00" lengthAdjust="spacingAndGlyphs" stroke="#1a1a1a" stroke-width="0.15" xml:space="preserve" style="white-space:pre">SF  BM RAO Phase</text>
<text x="499.10" y="349.25" font-size="7.6" fill="#1a1a1a" font-family="'Liberation Sans', sans-serif" textLength="58.90" lengthAdjust="spacingAndGlyphs" stroke="#1a1a1a" stroke-width="0.15" xml:space="preserve" style="white-space:pre">SF  BM RAO @ t=0.0</text>
<text x="499.10" y="361.65" font-size="7.6" fill="#1a1a1a" font-family="'Liberation Sans', sans-serif" textLength="60.30" lengthAdjust="spacingAndGlyphs" stroke="#1a1a1a" stroke-width="0.15" xml:space="preserve" style="white-space:pre">SF  BM RAO @ t=T/4</text>
<text x="499.10" y="377.15" font-size="7.6" fill="#1a1a1a" font-family="'Liberation Sans', sans-serif" textLength="62.20" lengthAdjust="spacingAndGlyphs" stroke="#1a1a1a" stroke-width="0.15" xml:space="preserve" style="white-space:pre">SF  BM RAO Envelope</text>
<text x="499.10" y="393.05" font-size="7.6" fill="#1a1a1a" font-family="'Liberation Sans', sans-serif" textLength="63.10" lengthAdjust="spacingAndGlyphs" stroke="#1a1a1a" stroke-width="0.15">Significant Amplitude</text>
</svg></body></html>
